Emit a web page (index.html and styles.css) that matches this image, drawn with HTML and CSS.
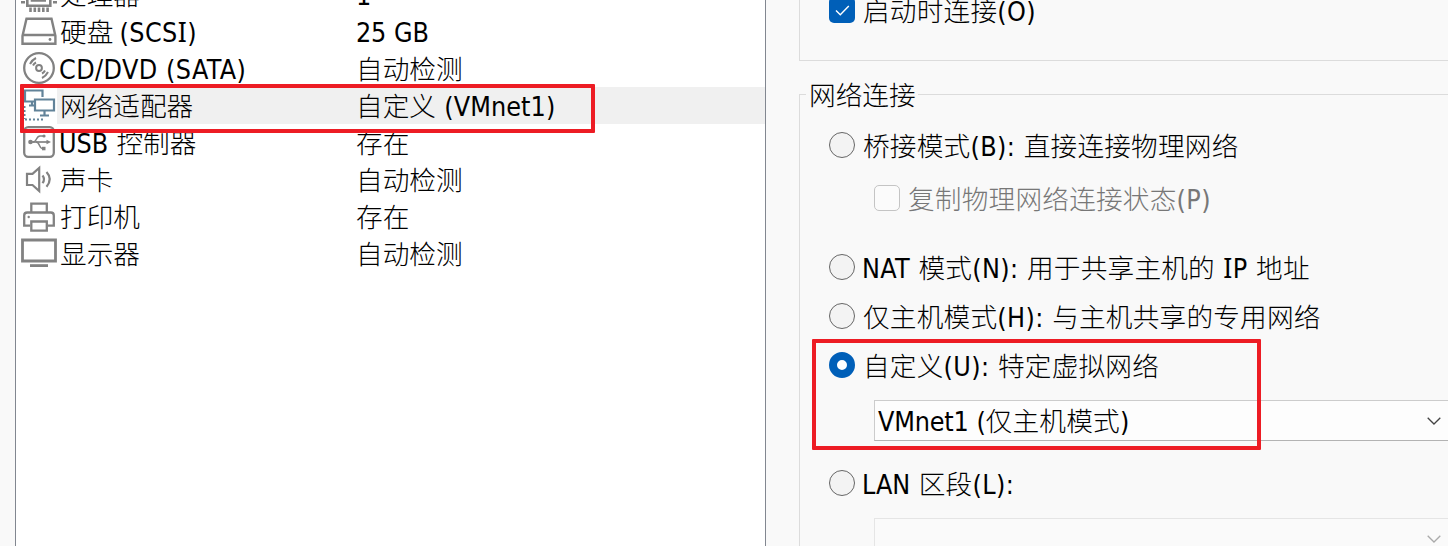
FILE: index.html
```html
<!DOCTYPE html>
<html lang="zh-CN">
<head>
<meta charset="utf-8">
<title>虚拟机设置</title>
<link rel="stylesheet" href="styles.css">
</head>
<body>
<main class="window">
  <section class="devices">
    <div class="row">
      <svg class="icon" viewBox="0 0 36 37"><g fill="none" stroke="#828282" stroke-width="2.600"><path d="M6.300 10v19.700h23V10z"/><path d="M11 15v9.500h14"/><path d="M0 26.300h4M32 26.300h4M0 19h4M32 19h4"/><path d="M9.500 31.500v4.500M13.800 31.500v4.500M18 31.500v4.500M22.300 31.500v4.500M26.600 31.500v4.500"/></g></svg>
      <span class="name">处理器</span><span class="value"><b>1</b></span>
    </div>
    <div class="row">
      <svg class="icon" viewBox="0 0 36 37"><path d="M5.500 5.800h25L34.400 23v7.700H1.500V23zM1.500 22h33" fill="none" stroke="#828282" stroke-width="2.400"/><circle cx="29" cy="26.500" r="1.400" fill="#828282"/></svg>
      <span class="name">硬盘 <b class="scsi">(SCS<i>I</i>)</b></span><span class="value"><b class="gb">25 GB</b></span>
    </div>
    <div class="row">
      <svg class="icon" viewBox="0 0 36 37"><g fill="none" stroke="#828282" stroke-width="2.300"><circle cx="18" cy="18" r="14.800"/><circle cx="18" cy="18" r="2.900" stroke-width="2"/><path d="M9 14q2-4 6-6M12 15.500q1-2 3-3M27 22q-2 4-6 6M24 20.500q-1 2-3 3" stroke-width="2"/></g></svg>
      <span class="name"><b class="lead cd">CD/DVD (SATA)</b></span><span class="value auto">自动检测</span>
    </div>
    <div class="row selected">
      <svg class="icon" viewBox="0 0 36 37"><g fill="none" stroke="#628399" stroke-width="2.200"><path d="M13 14.500H4V3.500h17.500V10M14 12.500h19v11H14zM23.500 24v4M19 28.500h9M11 15v4M8 18.500h5"/><path d="M3.500 19v13M4 32.500h19" stroke-width="2" stroke-dasharray="2 2"/></g></svg>
      <span class="name">网络适配器</span><span class="value auto">自定义 <b class="adapter">(VMnet1)</b></span>
    </div>
    <div class="row">
      <svg class="icon" viewBox="0 0 36 37"><g fill="none" stroke="#828282" stroke-width="2.300"><rect x="3.200" y="3.200" width="29.600" height="29.600" rx="4"/><path d="M8 18h20" stroke-width="1.700"/><path d="M12 18c4 0 3-6 7-6h3M15 18c4 0 3 6.500 6 6.500h2" stroke-width="1.500"/></g><g fill="#828282"><circle cx="9.500" cy="18" r="2.300"/><path d="M25.500 15.800l4.500 2.200-4.500 2.200z"/><circle cx="23" cy="12" r="1.600"/><path d="M21 22.800h3.500v3.500h-3.500z"/></g></svg>
      <span class="name"><b class="lead usb">USB</b> 控制器</span><span class="value">存在</span>
    </div>
    <div class="row">
      <svg class="icon" viewBox="0 0 36 37"><g fill="none" stroke="#828282" stroke-width="2.200"><path d="M6 12.800h5.500L18.200 7v23l-6.700-6H6z"/><path d="M21.500 14.500q3 3.800 0 7.700M25.500 11q6.500 7 0 14.700"/></g></svg>
      <span class="name">声卡</span><span class="value auto">自动检测</span>
    </div>
    <div class="row">
      <svg class="icon" viewBox="0 0 36 37"><g fill="none" stroke="#828282" stroke-width="2.300"><path d="M10.300 14.500V5.700h15.500v8.800"/><path d="M9 27.700H3.200V17.500q0-3 3-3h23.600q3 0 3 3v10.200H27"/><path d="M10.300 23.500h15.500v9.200H10.300z"/></g><circle cx="7.700" cy="19" r="1.200" fill="#828282"/></svg>
      <span class="name">打印机</span><span class="value">存在</span>
    </div>
    <div class="row">
      <svg class="icon" viewBox="0 0 36 37"><g fill="none" stroke="#828282" stroke-width="2.800"><path d="M1.500 5h33v21h-33z"/><path d="M9 30.600h18"/></g></svg>
      <span class="name">显示器</span><span class="value auto">自动检测</span>
    </div>
  </section>

  <section class="settings">
    <div class="group status">
      <label class="option"><span class="check on"><svg viewBox="0 0 26 26"><path d="M7 13.500l4.300 4.300 8.500-8.800" fill="none" stroke="#fff" stroke-width="1.400"/></svg></span><span class="text">启动时连接<b>(O)</b></span></label>
    </div>
    <div class="group network">
      <div class="legend">网络连接</div>
      <label class="option bridge"><span class="radio"></span><span class="text">桥接模式<b>(B):</b> 直接连接物理网络</span></label>
      <label class="option replicate"><span class="check"></span><span class="text">复制物理网络连接状态<b>(P)</b></span></label>
      <label class="option nat"><span class="radio"></span><span class="text"><b class="lead">NAT</b> 模式<b>(N):</b> 用于共享主机的 <b><i>I</i>P</b> 地址</span></label>
      <label class="option"><span class="radio"></span><span class="text">仅主机模式<b>(H):</b> 与主机共享的专用网络</span></label>
      <label class="option"><span class="radio on"></span><span class="text">自定义<b>(U):</b> 特定虚拟网络</span></label>
      <div class="combo"><span class="text"><b class="vm">VMnet1 (</b>仅主机模式<b>)</b></span><svg class="chevron" viewBox="0 0 14 8"><path d="M.7.700L7 7l6.300-6.300" fill="none" stroke="#444" stroke-width="1.300"/></svg></div>
      <label class="option lan"><span class="radio"></span><span class="text"><b class="lead lan-name">LAN</b> 区段<b>(L):</b></span></label>
      <div class="combo disabled"><svg class="chevron" viewBox="0 0 14 8"><path d="M.7.700L7 7l6.300-6.300" fill="none" stroke="#aaa" stroke-width="1.300"/></svg></div>
    </div>
  </section>
  <div class="mark mark-device"></div>
  <div class="mark mark-custom"></div>
</main>
</body>
</html>
```
FILE: styles.css
```css
* { box-sizing: border-box; }
body {
  margin: 0;
  background: #f9f9f9;
  color: #000;
  font: 300 26.67px/37px "Noto Sans CJK SC", sans-serif;
  word-spacing: 2.3px;
}
b { font: 400 26.67px/1 "DejaVu Sans Condensed", "DejaVu Sans", sans-serif; letter-spacing: .4px; word-spacing: .5px; }
b.lead { margin-left: -1px; }
b.adapter { letter-spacing: .1px; }
b.vm { letter-spacing: -.2px; }
b.usb, b.lan-name { letter-spacing: 0; }
b.gb { letter-spacing: -.2px; }
b.scsi { margin-left: -2px; }
i { font-family: "Noto Sans", sans-serif; font-style: normal; }
.window { position: relative; display: flex; width: 1448px; height: 546px; padding-left: 15px; overflow: hidden; }
.devices { width: 751px; height: 546px; border: solid #828790; border-width: 0 1px; background: #fff; overflow: hidden; flex: none; }
.row { display: flex; height: 37px; padding-left: 5px; white-space: nowrap; line-height: 35px; }
.row:first-child { margin-top: -24px; }
.row.selected { background: linear-gradient(to right, #fff 41px, #f0f0f0 41px); }
.icon { width: 36px; height: 37px; flex: none; }
.name { width: 298px; padding-left: 2px; margin-left: 1px; }
.value { flex: 1; }
.settings { flex: 1; padding-left: 33px; min-width: 0; }
.group { border: 1px solid #dcdcdc; border-right: 0; white-space: nowrap; }
.status { display: flex; height: 61px; border-top: 0; padding-left: 29px; }
.status .option { margin-top: -9px; }
.network { height: 500px; margin-top: 33px; padding-left: 29px; }
.legend { width: 112px; height: 37px; margin: -18px 0 0 -23px; padding-left: 3px; background: #f9f9f9; line-height: 34px; }
.option { display: flex; align-items: center; height: 38px; margin-bottom: 11px; gap: 8px; }
.bridge { margin: 12px 0 15px; }
.replicate { margin: 0 0 31px 45px; color: #777; }
.text { flex: none; padding-bottom: 2px; letter-spacing: .2px; }
.radio, .check { width: 26px; height: 26px; flex: none; border: 1px solid #666; border-radius: 50%; background: #f3f3f3; }
.radio.on { border: 8px solid #005fb8; background: #fff; }
.check { border: 1.500px solid #c4c4c4; border-radius: 5px; background: #fbfbfb; }
.check.on { border: 0; background: #005fb8; }
.check svg { display: block; }
.combo { display: flex; align-items: center; justify-content: space-between; height: 41px; margin: 16px 0 0 45px; padding: 0 7px 0 3px; border: 1px solid #ccc; border-bottom-color: #b3b3b3; border-right: 0; background: #fdfdfd; }
.chevron { width: 14px; height: 8px; margin-left: auto; }
.lan { margin: 23px 0 0; }
.disabled { border-color: #e5e5e5; background: #fafafa; }
.mark { position: absolute; border: 4px solid #ed1c24; border-radius: 1px; }
.mark-device { left: 20px; top: 84px; width: 575px; height: 49px; }
.mark-custom { left: 812px; top: 339px; width: 449px; height: 111px; }
```
